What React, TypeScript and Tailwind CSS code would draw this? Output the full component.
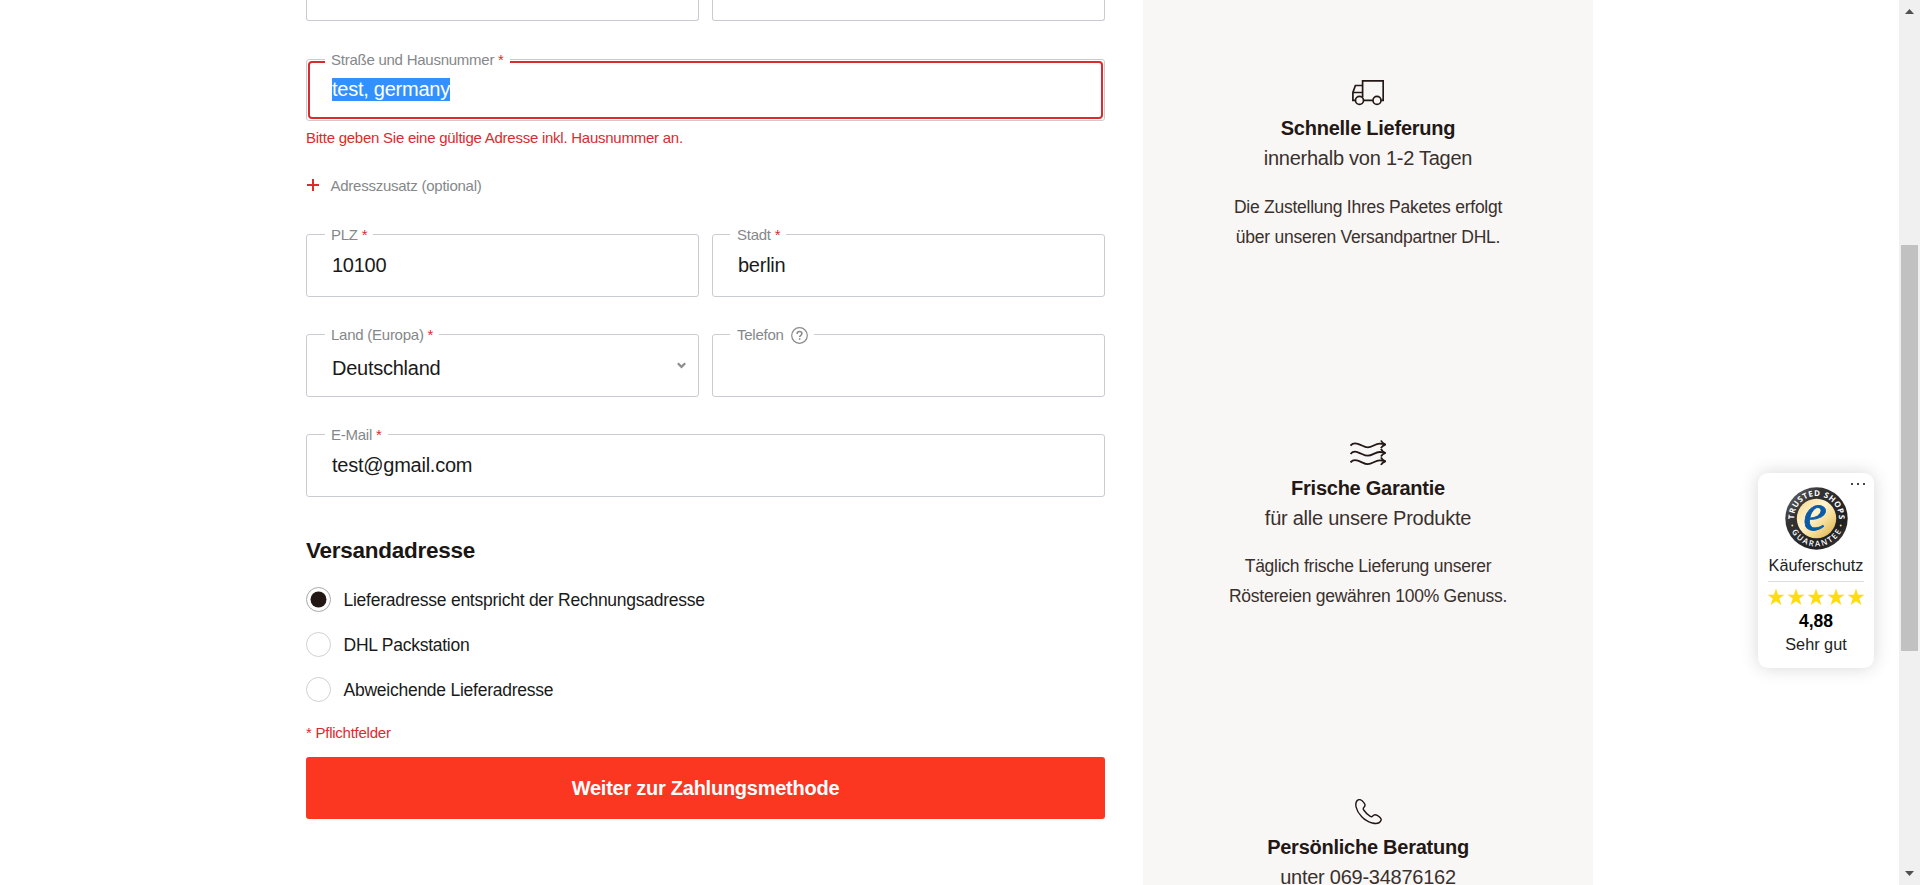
import React from "react";

function Label({ text, required, help, className = "left-[18px] pl-[6px]" }: { text: string; required?: boolean; help?: boolean; className?: string }) {
  return (
    <label className={`absolute -top-[10px] flex h-5 items-center bg-white pr-[6px] text-[15px] leading-5 whitespace-pre text-[#85888a] ${className}`}>
      {text}
      {required && <span className="text-[#dc2a2f]"> *</span>}
      {help && (
        <svg className="ml-[7px] mt-px h-[17px] w-[17px]" viewBox="0 0 17 17" fill="none" stroke="#8a8a8a">
          <circle cx="8.5" cy="8.5" r="7.8" strokeWidth="1.2" />
          <path d="M6.1 6.9c0-1.4 1-2.4 2.4-2.4s2.4.9 2.4 2.1c0 1.7-2.3 1.7-2.3 3.5" strokeWidth="1.5" />
          <path d="M8.6 11.2v1.6" strokeWidth="1.6" />
        </svg>
      )}
    </label>
  );
}

function Field({ label, value, required, help, select, labelClass }: { label: string; value?: string; required?: boolean; help?: boolean; select?: boolean; labelClass?: string }) {
  return (
    <div className="relative h-[63px] flex-1 rounded-[3px] border border-[#c9cdd1]">
      <Label text={label} required={required} help={help} className={labelClass} />
      <div className={`flex items-center justify-between pl-[25px] pr-3 text-xl leading-[30px] text-[#1a1a1a] ${select ? "pt-[18px]" : "pt-[15px]"}`}>
        <span>{value}</span>
        {select && (
          <svg className="-mt-[6px] h-[7px] w-[9px]" viewBox="0 0 9 7" fill="none" stroke="#8f8f8f" strokeWidth="2.3">
            <path d="M.8 1.2 4.5 4.9 8.2 1.2" />
          </svg>
        )}
      </div>
    </div>
  );
}

function Radio({ label, checked }: { label: string; checked?: boolean }) {
  return (
    <div className="flex h-[45px] items-center">
      <svg className="h-[25px] w-[25px]" viewBox="0 0 25 25">
        <circle cx="12.500" cy="12.500" r="12" fill="none" stroke={checked ? "#a9a9a9" : "#cdd1d4"} />
        {checked && <circle cx="12.500" cy="12.500" r="8" fill="#231815" />}
      </svg>
      <span className="ml-[12.5px] text-[17.5px] leading-[26px] text-[#1a1a1a]">{label}</span>
    </div>
  );
}

function Benefit({ icon, title, sub, lines, className, linesClass = "mt-[19px]" }: { icon: React.ReactNode; title: string; sub: string; lines: string[]; className: string; linesClass?: string }) {
  return (
    <section className={`flex shrink-0 flex-col items-center text-center text-[#231815] ${className}`}>
      <div className="flex h-[25px] items-start justify-center">{icon}</div>
      <h3 className="mt-2 text-xl leading-[30px] font-bold">{title}</h3>
      <p className="text-xl leading-[30px] text-[#3a302d]">{sub}</p>
      <div className={`text-[17.5px] leading-[30px] text-[#3a302d] ${linesClass}`}>
        {lines.map((l) => (
          <p key={l}>{l}</p>
        ))}
      </div>
    </section>
  );
}

const Truck = (
  <svg className="h-[26px] w-8" viewBox="0 0 32 26" fill="none" stroke="#231815" strokeWidth="1.7">
    <path d="M3.600 20.300H.9v-7.800L3.400 5.500h7.100M.9 12.500h9.600M11.700 20.300h9.100M29.200 20.300h2V.9H10.600v16" />
    <circle cx="7.5" cy="20.400" r="4" />
    <circle cx="25" cy="20.400" r="4" />
  </svg>
);

const Waves = (
  <svg className="h-[26px] w-9" viewBox="0 0 36 26" fill="none" stroke="#231815" strokeWidth="1.8">
    {[0, 8.4, 16.8].map((y) => (
      <g key={y} transform={`translate(0 ${y})`}>
        <path d="M.5 5.600C2.400 3.200 5 2.800 8 3.900c4 1.300 6.200 3.400 9.800 3.400 4.600 0 7.200-3.700 11.800-3.700 1.900 0 3.500.3 5.600.8" />
        <path d="M31 .5c.8 1.900 2.100 3.200 4.300 4.100-1.900.6-3.400 1.800-4.400 3.500" />
      </g>
    ))}
  </svg>
);

const Phone = (
  <svg className="h-[26px] w-[27px]" viewBox="0 0 27 26" fill="none" stroke="#231815" strokeWidth="1.400">
    <path d="M3.200.9C5.100-.1 7.700 2 9.400 4.300c1.200 1.800.8 2.800-.4 3.900-.9.8-1 1.700-.3 2.800 1.800 2.700 3.900 4.800 6.600 6.300 1 .6 1.700.5 2.400-.3 1.200-1.500 2.600-1.800 4.500-.7 2 1.200 4.700 3.100 3.800 5.100-1.200 2.700-4.700 3.600-8.700 2.600C9.200 22.100 2.600 14.600 1.100 8.100.4 4.700.9 2.100 3.200.9z" />
  </svg>
);

function Seal() {
  return (
    <svg className="h-[63px] w-[63px]" viewBox="0 0 63 63">
      <defs>
        <linearGradient id="ring" x1="0" y1="0" x2="1" y2="1">
          <stop offset="0" stopColor="#77777a" />
          <stop offset=".3" stopColor="#333335" />
          <stop offset=".75" stopColor="#202022" />
          <stop offset="1" stopColor="#4a4a4c" />
        </linearGradient>
        <linearGradient id="gold" x1="0" y1="0" x2="1" y2="1">
          <stop offset="0" stopColor="#f3d58a" />
          <stop offset=".42" stopColor="#fff4cf" />
          <stop offset=".65" stopColor="#f5dc95" />
          <stop offset="1" stopColor="#d9a93f" />
        </linearGradient>
        <path id="arcTop" d="M9.340 35.400a22.500 22.500 0 1 1 44.320 0" />
        <path id="arcBottom" d="M3.500 31.500a28 28 0 0 0 56 0" />
      </defs>
      <circle cx="31.500" cy="31.500" r="31.200" fill="url(#ring)" />
      <circle cx="31.500" cy="31.500" r="19.700" fill="url(#gold)" />
      <g fill="#fff" fontFamily="Open Sans, sans-serif" fontWeight="700" fontSize="8">
        <text textAnchor="middle"><textPath href="#arcTop" startOffset="50%" textLength="72">TRUSTED SHOPS</textPath></text>
        <text fontWeight="600" textAnchor="middle"><textPath href="#arcBottom" startOffset="50%" textLength="61">GUARANTEE</textPath></text>
      </g>
      <circle cx="7.300" cy="38.500" r="1" fill="#f3d58a" />
      <circle cx="55.700" cy="38.500" r="1" fill="#f3d58a" />
      <text x="30" y="43.200" textAnchor="middle" fill="#0a5ba8" stroke="#0a5ba8" strokeWidth=".8" fontFamily="Liberation Serif, serif" fontStyle="italic" fontSize="53">e</text>
    </svg>
  );
}

const Star = () => (
  <svg className="h-[18px] w-[18px]" viewBox="0 0 18 18" fill="#ffdc0f">
    <path d="M9 .5l2.100 6.200h6.400l-5.200 3.900 2 6.400L9 13.200 3.700 17l2-6.400L.5 6.700h6.400z" />
  </svg>
);

export default function App() {
  return (
    <div className="relative flex h-[885px] w-full overflow-hidden bg-white font-['Liberation_Sans',Arial,sans-serif] tracking-[-0.25px]">
      <main className="ml-[306px] w-[799px] shrink-0">
        <div className="flex gap-[13px]">
          <div className="h-[21px] flex-1 rounded-b-[3px] border border-t-0 border-[#c9cdd1]" />
          <div className="h-[21px] flex-1 rounded-b-[3px] border border-t-0 border-[#c9cdd1]" />
        </div>
        <div className="relative mt-[38px] h-[62px] rounded-[3px] border border-[#c9cdd1] p-px">
          <div className="h-full rounded-[4px] border-2 border-[#dc2a2f] pt-[11px] pl-[22px] text-xl leading-[30px]">
            <span className="inline-block h-[23px] bg-[#3390ff] leading-[23px] text-white">test, germany</span>
          </div>
          <Label text="Straße und Hausnummer" required />
        </div>
        <p className="mt-[7px] text-[15px] leading-5 text-[#dc2a2f]">Bitte geben Sie eine gültige Adresse inkl. Hausnummer an.</p>
        <div className="mt-[28px] flex items-center text-[15px] leading-5 text-[#85888a]">
          <svg className="-mt-[3px] mr-[11px] ml-px h-3 w-3" viewBox="0 0 12 12" stroke="#dc2a2f" strokeWidth="2">
            <path d="M6 0v12M0 6h12" />
          </svg>
          <span className="pl-[0.5px]">Adresszusatz (optional)</span>
        </div>
        <div className="mt-[38px] flex gap-[13px]">
          <Field label="PLZ" value="10100" required />
          <Field label="Stadt" value="berlin" required labelClass="left-[17px] pl-[7px]" />
        </div>
        <div className="mt-[37px] flex gap-[13px]">
          <Field label="Land (Europa)" value="Deutschland" required select />
          <Field label="Telefon" help labelClass="left-[17px] pl-[7px]" />
        </div>
        <div className="mt-[37px] flex">
          <Field label="E-Mail" value="test@gmail.com" required />
        </div>
        <h2 className="mt-[39px] text-[22.5px] leading-[30px] font-bold text-[#1a1613]">Versandadresse</h2>
        <div className="mt-[11px]">
          <Radio label="Lieferadresse entspricht der Rechnungsadresse" checked />
          <Radio label="DHL Packstation" />
          <Radio label="Abweichende Lieferadresse" />
        </div>
        <p className="mt-[11px] text-[15px] leading-5 text-[#dc2a2f]">* Pflichtfelder</p>
        <button className="mt-[14px] flex h-[62px] w-full items-center justify-center rounded-[3px] bg-[#fb3621] text-xl font-bold text-white">
          Weiter zur Zahlungsmethode
        </button>
      </main>

      <aside className="ml-[38px] flex h-full w-[450px] shrink-0 flex-col overflow-hidden bg-[#f8f7f5] pt-20">
        <Benefit className="h-[360px]" icon={Truck} title="Schnelle Lieferung" sub="innerhalb von 1-2 Tagen" lines={["Die Zustellung Ihres Paketes erfolgt", "über unseren Versandpartner DHL."]} />
        <Benefit className="h-[359px]" linesClass="mt-[18px]" icon={Waves} title="Frische Garantie" sub="für alle unsere Produkte" lines={["Täglich frische Lieferung unserer", "Röstereien gewähren 100% Genuss."]} />
        <Benefit className="h-[359px]" icon={Phone} title="Persönliche Beratung" sub="unter 069-34876162" lines={[]} />
      </aside>

      <div className="absolute top-[473px] left-[1758px] flex h-[195px] w-[116px] flex-col items-center rounded-[10px] bg-white tracking-normal text-black shadow-[0_0_18px_rgba(0,0,0,0.16)]">
        <div className="absolute top-[10px] right-[9px] flex gap-1">
          <span className="h-[2px] w-[2px] bg-[#444]" />
          <span className="h-[2px] w-[2px] bg-[#444]" />
          <span className="h-[2px] w-[2px] bg-[#444]" />
        </div>
        <div className="mt-[14px]"><Seal /></div>
        <div className="mt-[5px] text-[16.25px] leading-5 text-[#222]">Käuferschutz</div>
        <div className="mt-[6px] h-px w-24 bg-[#ddd]" />
        <div className="mt-[6px] flex gap-[2px]">
          <Star /><Star /><Star /><Star /><Star />
        </div>
        <div className="mt-[3px] text-[17.500px] leading-6 font-bold">4,88</div>
        <div className="-mt-px text-[16.25px] leading-6 text-[#222]">Sehr gut</div>
      </div>

      <div className="ml-auto flex h-full w-[21px] flex-col items-center bg-[#f0f0f0]">
        <svg className="mt-[9px] h-[5px] w-[9px]" viewBox="0 0 9 5" fill="#505050"><path d="M4.500 0 9 5H0z" /></svg>
        <div className="mt-[231px] h-[406px] w-[17px] bg-[#c1c1c1]" />
        <svg className="mt-auto mb-[9px] h-[5px] w-[9px]" viewBox="0 0 9 5" fill="#505050"><path d="M0 0h9L4.500 5z" /></svg>
      </div>
    </div>
  );
}
